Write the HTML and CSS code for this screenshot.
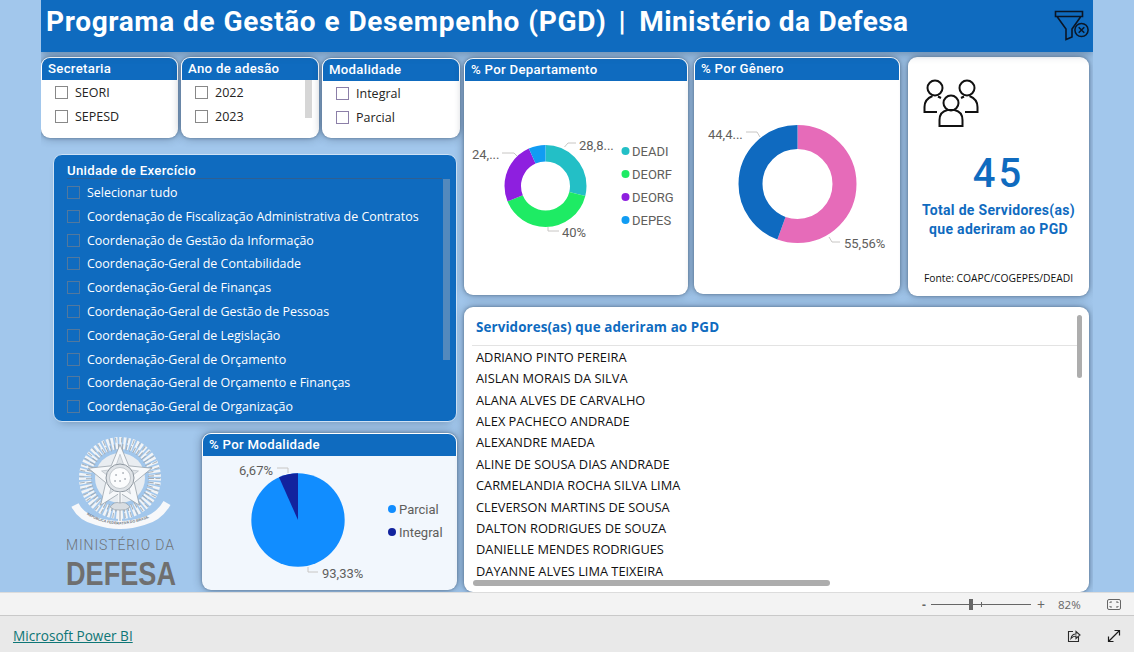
FILE: index.html
```html
<!DOCTYPE html>
<html lang="pt-BR">
<head>
<meta charset="utf-8">
<title>Programa de Gestão e Desempenho (PGD)</title>
<link rel="stylesheet" href="styles.css">
</head>
<body>
<main class="stage">
  <div class="report">
    <header class="titlebar">
      <h1 class="title">Programa de Gestão e Desempenho (PGD)<span class="title-sep">|</span><span class="title-org">Ministério da Defesa</span></h1>
      <svg class="filter-icon" viewBox="0 0 36 32" width="36" height="32" aria-hidden="true">
        <path d="M1.5 1.5H28.5V6.5H1.5Z M3 6.5L12 19V29.5L18 27V19L26.5 7" fill="none" stroke="#0a1626" stroke-width="1.6"/>
        <circle cx="27.5" cy="20" r="6.6" fill="none" stroke="#0a1626" stroke-width="1.5"/>
        <path d="M24.7 17.2L30.3 22.8M30.3 17.2L24.7 22.8" stroke="#0a1626" stroke-width="1.5"/>
      </svg>
    </header>
    <div class="content">
      <section class="left">
        <div class="slicers">
          <div class="card slicer">
            <h2 class="head">Secretaria</h2>
            <ul class="opts">
              <li class="opt"><span class="box"></span>SEORI</li>
              <li class="opt"><span class="box"></span>SEPESD</li>
            </ul>
          </div>
          <div class="card slicer slicer-scroll">
            <h2 class="head">Ano de adesão</h2>
            <ul class="opts">
              <li class="opt"><span class="box"></span>2022</li>
              <li class="opt"><span class="box"></span>2023</li>
            </ul>
            <span class="slicer-thumb"></span>
          </div>
          <div class="card slicer slicer-low">
            <h2 class="head">Modalidade</h2>
            <ul class="opts">
              <li class="opt"><span class="box box-violet"></span>Integral</li>
              <li class="opt"><span class="box box-violet"></span>Parcial</li>
            </ul>
          </div>
        </div>
        <div class="units">
          <h2 class="units-title">Unidade de Exercício</h2>
          <ul class="unit-list">
            <li class="unit"><span class="box box-dark"></span>Selecionar tudo</li>
            <li class="unit"><span class="box box-dark"></span>Coordenação de Fiscalização Administrativa de Contratos</li>
            <li class="unit"><span class="box box-dark"></span>Coordenação de Gestão da Informação</li>
            <li class="unit"><span class="box box-dark"></span>Coordenação-Geral de Contabilidade</li>
            <li class="unit"><span class="box box-dark"></span>Coordenação-Geral de Finanças</li>
            <li class="unit"><span class="box box-dark"></span>Coordenação-Geral de Gestão de Pessoas</li>
            <li class="unit"><span class="box box-dark"></span>Coordenação-Geral de Legislação</li>
            <li class="unit"><span class="box box-dark"></span>Coordenação-Geral de Orçamento</li>
            <li class="unit"><span class="box box-dark"></span>Coordenação-Geral de Orçamento e Finanças</li>
            <li class="unit"><span class="box box-dark"></span>Coordenação-Geral de Organização</li>
          </ul>
          <span class="units-thumb"></span>
        </div>
        <div class="bottom">
          <svg class="logo" viewBox="0 0 112 155" width="112" height="155" role="img" aria-label="Ministério da Defesa">
            <circle cx="54" cy="41" r="35" fill="none" stroke="#f1f4f7" stroke-width="12" stroke-dasharray="2.400 1.600"/>
            <circle cx="54" cy="41" r="38" fill="none" stroke="#aab3bb" stroke-width="5" stroke-dasharray="1 5"/>
            <circle cx="54" cy="41" r="31" fill="none" stroke="#a3acb5" stroke-width="6" stroke-dasharray="1 3"/>
            <circle cx="54" cy="41" r="25" fill="#e9edf1"/>
            <g transform="translate(54 41) scale(.88) translate(-54 -41)">
              <path d="M54 3L64 27.2L90 29.9L70.2 46.3L76 72L54 58L32 72L37.8 46.3L18 29.9L44 27.2Z" fill="#f6f8fa" stroke="#8f98a1" stroke-width=".8"/>
              <path d="M54 14L60 31L75 33L62 43L66 59L54 50L42 59L46 43L33 33L48 31Z" fill="#dfe4e8" stroke="#a6aeb6" stroke-width=".6"/>
            </g>
            <circle cx="54" cy="41" r="14" fill="#dfe3e7" stroke="#8f98a1" stroke-width="1"/>
            <circle cx="54" cy="41" r="10.500" fill="#fbfcfd" stroke="#a4acb4" stroke-width=".6"/>
            <path d="M50 38h.1M57 36h.1M54 44h.1M59 42h.1M49 44h.1" stroke="#868f98" stroke-width="1.600" stroke-linecap="round"/>
            <path d="M54 55V92" stroke="#f4f6f8" stroke-width="4"/>
            <path d="M54 55V92" stroke="#8b949c" stroke-width=".8"/>
            <path d="M44 70q4-6 10-4q6-2 10 4q-4 4-10 3q-6 1-10-3z" fill="#d8dde2" stroke="#7d868f" stroke-width=".5"/>
            <path d="M9 68Q15 80 30 84Q42 88 54 88Q66 88 78 84Q93 80 101 66" fill="none" stroke="#f7f8fa" stroke-width="8" stroke-linejoin="round"/>
            <path id="ribbon-text" d="M16 74Q30 86 54 87.500Q78 86 94 74" fill="none"/>
            <text class="ribbon-text"><textPath href="#ribbon-text" startOffset="7%">REPÚBLICA FEDERATIVA DO BRASIL</textPath></text>
            <text class="logo-small" x="0" y="113" textLength="108" lengthAdjust="spacing">MINISTÉRIO DA</text>
            <text class="logo-big" x="0" y="147.500" textLength="110" lengthAdjust="spacingAndGlyphs">DEFESA</text>
          </svg>
          <div class="card pie-card">
            <h2 class="head">% Por Modalidade</h2>
            <svg class="chart" viewBox="202 456 255 134" width="255" height="134" aria-label="% Por Modalidade">
              <circle cx="298" cy="520" r="46.7" fill="#118DFF"/>
              <path d="M298 520L298 473.3A46.7 46.7 0 0 0 279 477.3Z" fill="#12239E"/>
              <path class="leader" d="M277 468H288V473M308 567V572H318"/>
              <text class="lbl" x="239" y="475">6,67%</text>
              <text class="lbl" x="322" y="578">93,33%</text>
              <circle cx="392" cy="509" r="4" fill="#118DFF"/>
              <circle cx="392" cy="532" r="4" fill="#12239E"/>
              <text class="lgd" x="399" y="514">Parcial</text>
              <text class="lgd" x="399" y="537">Integral</text>
            </svg>
          </div>
        </div>
      </section>
      <section class="right">
        <div class="top">
          <div class="card chart-dept">
            <h2 class="head">% Por Departamento</h2>
            <svg class="chart" viewBox="464 81 224 214" width="224" height="214" aria-label="% Por Departamento">
              <g fill="none" stroke-width="16.5" transform="rotate(-90 545.5 186)">
                <circle cx="545.5" cy="186" r="32.75" pathLength="100" stroke="#23BFC6" stroke-dasharray="28.89 71.11"/>
                <circle cx="545.5" cy="186" r="32.75" pathLength="100" stroke="#1EEB64" stroke-dasharray="40 60" stroke-dashoffset="-28.89"/>
                <circle cx="545.5" cy="186" r="32.75" pathLength="100" stroke="#8E1FDF" stroke-dasharray="24.44 75.56" stroke-dashoffset="-68.89"/>
                <circle cx="545.5" cy="186" r="32.75" pathLength="100" stroke="#119CF3" stroke-dasharray="6.67 93.33" stroke-dashoffset="-93.33"/>
              </g>
              <path class="leader" d="M564.5 147L568 143H576M502 153H514L517 156M548 227V231H559"/>
              <text class="lbl" x="579" y="150">28,8...</text>
              <text class="lbl" x="472" y="159">24,...</text>
              <text class="lbl" x="562" y="237">40%</text>
              <circle cx="625.5" cy="151" r="4" fill="#23BFC6"/>
              <circle cx="625.5" cy="174" r="4" fill="#1EEB64"/>
              <circle cx="625.5" cy="197" r="4" fill="#8E1FDF"/>
              <circle cx="625.5" cy="220" r="4" fill="#119CF3"/>
              <text class="lgd" x="632" y="156">DEADI</text>
              <text class="lgd" x="632" y="179">DEORF</text>
              <text class="lgd" x="632" y="202">DEORG</text>
              <text class="lgd" x="632" y="225">DEPES</text>
            </svg>
          </div>
          <div class="card chart-gender">
            <h2 class="head">% Por Gênero</h2>
            <svg class="chart" viewBox="694 80 206 214" width="206" height="214" aria-label="% Por Gênero">
              <g fill="none" stroke-width="24" transform="rotate(-90 797.5 184)">
                <circle cx="797.5" cy="184" r="47" pathLength="100" stroke="#E66BB9" stroke-dasharray="55.56 44.44"/>
                <circle cx="797.5" cy="184" r="47" pathLength="100" stroke="#0F6AC0" stroke-dasharray="44.44 55.56" stroke-dashoffset="-55.56"/>
              </g>
              <path class="leader" d="M746 132H757L760 137M829 237L832 242H840"/>
              <text class="lbl" x="708" y="139">44,4...</text>
              <text class="lbl" x="844" y="248">55,56%</text>
            </svg>
          </div>
          <div class="card kpi">
            <svg class="people" viewBox="0 0 60 52" width="60" height="52" aria-hidden="true">
              <g fill="none" stroke="#111" stroke-width="2">
                <circle cx="13" cy="11" r="7.5"/>
                <circle cx="45" cy="11" r="7.5"/>
                <circle cx="29" cy="26" r="7.5"/>
                <path d="M17.5 49V43C17.5 37 21 34 25.5 33H32.5C37 34 40.500 37 40.500 43V49Z"/>
                <path d="M15 35H2.500V30C2.500 25 5.500 21 10.500 19M16 19.500L19 21"/>
                <path d="M43 35H55.500V30C55.500 25 52.500 21 47.500 19M42 19.500L39 21"/>
              </g>
            </svg>
            <div class="kpi-num">45</div>
            <div class="kpi-label">Total de Servidores(as)<br>que aderiram ao PGD</div>
            <div class="kpi-src">Fonte: COAPC/COGEPES/DEADI</div>
          </div>
        </div>
        <div class="card names">
          <h2 class="names-title">Servidores(as) que aderiram ao PGD</h2>
          <ul class="name-list">
            <li>ADRIANO PINTO PEREIRA</li>
            <li>AISLAN MORAIS DA SILVA</li>
            <li>ALANA ALVES DE CARVALHO</li>
            <li>ALEX PACHECO ANDRADE</li>
            <li>ALEXANDRE MAEDA</li>
            <li>ALINE DE SOUSA DIAS ANDRADE</li>
            <li>CARMELANDIA ROCHA SILVA LIMA</li>
            <li>CLEVERSON MARTINS DE SOUSA</li>
            <li>DALTON RODRIGUES DE SOUZA</li>
            <li>DANIELLE MENDES RODRIGUES</li>
            <li>DAYANNE ALVES LIMA TEIXEIRA</li>
          </ul>
          <span class="v-thumb"></span>
          <span class="h-thumb"></span>
        </div>
      </section>
    </div>
  </div>
</main>
<div class="zoombar">
  <span class="zb-minus">-</span>
  <span class="track"><span class="thumb"></span><span class="tick"></span></span>
  <span class="zb-plus">+</span>
  <span class="zb-pct">82%</span>
  <svg class="zb-fit" viewBox="0 0 14 11" width="14" height="11" aria-hidden="true">
    <rect x=".5" y=".5" width="13" height="10" rx="1.500" fill="none" stroke="#666"/>
    <path d="M3 4V3H5M9 3H11V4M11 7V8H9M5 8H3V7" fill="none" stroke="#666"/>
  </svg>
</div>
<footer class="footer">
  <a class="pbi-link" href="#">Microsoft Power BI</a>
  <svg class="foot-share" viewBox="0 0 14 14" width="14" height="14" aria-hidden="true">
    <path d="M6 2.500H1.500V12.500H11.500V8" fill="none" stroke="#2b2b2b" stroke-width="1.100"/>
    <path d="M4 9.500C4.500 6.500 6.500 5 9 5V2.500L13 6L9 9.500V7C7 7 5.500 7.800 4 9.500Z" fill="none" stroke="#2b2b2b" stroke-width="1.100"/>
  </svg>
  <svg class="foot-expand" viewBox="0 0 14 14" width="14" height="14" aria-hidden="true">
    <path d="M1.500 12.500L12.500 1.500M7.500 1.500H12.500V6.500M1.500 7.500V12.500H6.500" fill="none" stroke="#1a1a1a" stroke-width="1.200"/>
  </svg>
</footer>
</body>
</html>
```

FILE: styles.css
```css
* { box-sizing: border-box; margin: 0; padding: 0; }
html, body { width: 1134px; height: 652px; overflow: hidden; }
body { font-family: "Open Sans", "Noto Sans", sans-serif; background: #A2C7EC; display: flex; flex-direction: column; }
ul { list-style: none; }

.stage { height: 592px; flex: none; padding-left: 41px; }
.report { width: 1052px; height: 592px; overflow: hidden; display: flex; flex-direction: column; }

.titlebar { height: 52px; flex: none; background: #0F6BBF; display: flex; justify-content: space-between; align-items: flex-start; padding: 9px 3px 0 5px; box-shadow: 0 2px 8px rgba(40,70,100,.45); position: relative; z-index: 1; }
.title { font-family: Roboto, sans-serif; font-weight: 700; font-size: 28px; line-height: 26px; color: #fff; letter-spacing: .65px; word-spacing: .6px; white-space: nowrap; }
.title-sep { margin: 0 13px 0 12px; }
.title-org { letter-spacing: .42px; }
.filter-icon { display: block; margin-top: 1px; }

.content { flex: 1; display: flex; min-height: 0; }
.left { width: 423px; flex: none; padding-top: 5px; }
.right { flex: 1; padding-top: 5px; }

.card { background: #fff; border-radius: 9px; box-shadow: 0 0 3px rgba(30,50,75,.4), 0 0 10px rgba(30,50,75,.45); overflow: hidden; position: relative; }
.head { height: 23px; background: #0F6BBF; color: #fff; font-family: Roboto, sans-serif; font-weight: 500; font-size: 13.200px; line-height: 21px; padding-left: 6px; letter-spacing: .3px; border: solid #fff; border-width: 1px 1px 0; border-radius: 9px 9px 0 0; }

.slicers { display: flex; gap: 3px; }
.slicer { width: 137px; height: 81px; }
.slicer-scroll { width: 138px; }
.slicer-low { width: 138px; margin-top: 1px; height: 80px; }
.opts { padding: 0 0 0 14px; }
.opt { display: flex; align-items: center; height: 24px; font-size: 12.500px; color: #252423; }
.box { width: 13px; height: 13px; border: 1px solid #888; flex: none; margin-right: 7px; }
.box-violet { border-color: #8c7fa8; }
.box-dark { border-color: #52789d; }
.slicer-thumb { position: absolute; right: 7px; top: 23px; width: 7px; height: 38px; background: #d6d6d6; }

.units { position: relative; width: 404px; height: 268px; margin: 16px 0 0 12px; background: #0F6BBF; border: 1px solid #cfe2f5; border-radius: 9px; padding: 8px 14px 0 13px; box-shadow: 0 6px 10px -6px rgba(30,50,75,.4); }
.units-title { font-family: Roboto, sans-serif; font-weight: 500; font-size: 13.200px; line-height: 15px; color: #fff; letter-spacing: .3px; border-bottom: 1px solid #2f5f92; height: 16px; }
.unit-list { padding-top: 1.600px; }
.unit { display: flex; align-items: center; height: 23.800px; font-size: 12.450px; color: #fff; white-space: nowrap; }
.units-thumb { position: absolute; right: 6px; top: 24px; width: 7px; height: 181px; background: #5389bd; }

.bottom { display: flex; margin-top: 11px; align-items: flex-start; }
.logo { display: block; margin: 4px 0 0 25px; flex: none; overflow: visible; }
.ribbon-text { font-family: "Liberation Sans", sans-serif; font-weight: 700; font-size: 3.600px; fill: #6b737b; }
.logo-small { font-family: Roboto, sans-serif; font-weight: 300; font-size: 14px; fill: #6f7377; }
.logo-big { font-family: "Liberation Sans", sans-serif; font-weight: 700; font-size: 33.500px; fill: #6f6f6f; }
.pie-card { width: 255px; height: 157px; margin-left: 24px; background: #F2F7FD; flex: none; }
.chart { display: block; }
.lbl { font-family: Roboto, sans-serif; font-size: 13px; fill: #605E5C; }
.lgd { font-family: Roboto, sans-serif; font-size: 13px; fill: #605E5C; }
.leader { fill: none; stroke: #c8c6c4; stroke-width: 1; }

.top { display: flex; align-items: flex-start; }
.chart-dept { width: 224px; height: 237px; margin-top: 1px; }
.chart-gender { width: 206px; height: 237px; margin-left: 6px; }
.kpi { width: 181px; height: 239px; margin-left: 8px; text-align: center; }
.people { display: block; margin: 20px 0 0 14px; }
.kpi-num { font-family: Roboto, sans-serif; font-size: 40px; line-height: 44px; color: #0F6BBF; letter-spacing: 3px; margin-top: 23px; font-weight: 500; }
.kpi-label { font-family: Roboto, sans-serif; font-weight: 700; font-size: 14px; line-height: 19px; letter-spacing: .3px; color: #0F6BBF; margin-top: 5px; }
.kpi-src { font-size: 10.300px; line-height: 14px; color: #111; margin-top: 32px; white-space: nowrap; }

.names { height: 285px; width: 625px; margin-top: 11px; }
.names-title { font-size: 13.400px; font-weight: 700; line-height: 16px; color: #0F6BBF; padding: 12px 0 10px 4px; height: 38.500px; margin: 0 12px 0 8px; border-bottom: 1px solid #e3e3e3; letter-spacing: .1px; }
.name-list { padding: 1.400px 0 0 12px; }
.name-list li { height: 21.400px; line-height: 21.400px; font-size: 12.800px; color: #111; white-space: nowrap; }
.v-thumb { position: absolute; right: 7px; top: 8px; width: 5px; height: 63px; border-radius: 3px; background: #adadad; }
.h-thumb { position: absolute; left: 9px; top: 273px; width: 357px; height: 6px; border-radius: 3px; background: #adadad; }

.zoombar { height: 24px; flex: none; background: #F3F3F3; border-top: 1px solid #dcdcdc; border-bottom: 1px solid #c9c9c9; display: flex; align-items: center; padding-left: 922px; color: #666; font-size: 12px; }
.zb-minus { width: 9px; font-weight: 700; font-size: 12px; }
.track { position: relative; width: 100px; height: 1px; background: #666; }
.thumb { position: absolute; left: 38px; top: -5px; width: 4px; height: 11px; background: #666; }
.tick { position: absolute; left: 50px; top: -2px; width: 1px; height: 5px; background: #666; }
.zb-plus { width: 17px; margin-left: 6px; font-size: 14px; }
.zb-pct { width: 49px; margin-left: 4px; font-size: 11.500px; }
.zb-fit { display: block; }

.footer { flex: 1; background: #E9E9E9; display: flex; align-items: center; padding: 3px 0 0 13px; }
.pbi-link { font-size: 13.600px; color: #0E7676; text-decoration: underline; }
.foot-share { margin-left: auto; display: block; }
.foot-expand { margin: 0 13px 0 26px; display: block; }
```
